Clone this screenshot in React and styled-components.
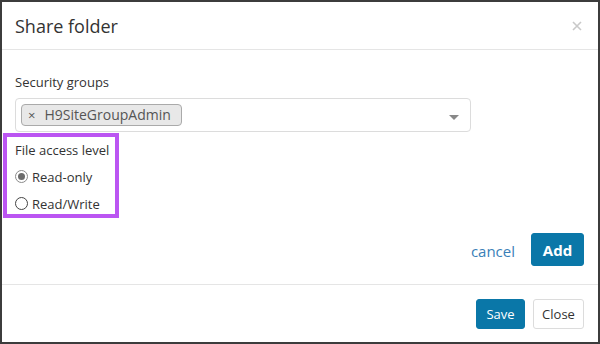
import React from "react";
import styled, { createGlobalStyle } from "styled-components";

const Global = createGlobalStyle`
  html, body { margin: 0; padding: 0; background: #fff; }
  body { font-family: "Open Sans", "Liberation Sans", sans-serif; color: #333; }
  * { box-sizing: border-box; }
`;

const Frame = styled.div`
  width: 600px;
  height: 344px;
  border: 2px solid #3c3c3c;
  display: flex;
  flex-direction: column;
  background: #fff;
`;

const Header = styled.div`
  height: 48px;
  flex: none;
  display: flex;
  align-items: center;
  justify-content: space-between;
  padding: 0 16px 0 13px;
  border-bottom: 1px solid #e5e5e5;
`;

const Title = styled.h4`
  margin: 0;
  font-size: 18px;
  font-weight: 400;
  line-height: 24px;
  color: #333;
`;

const CloseX = styled.button`
  border: 0;
  background: none;
  padding: 0;
  width: 10px;
  height: 10px;
  display: flex;
  margin-top: 1px;
`;

const Body = styled.div`
  flex: 1;
  padding: 23px 13px 0 13px;
  display: flex;
  flex-direction: column;
`;

const Label = styled.div`
  font-size: 13px;
  line-height: 18px;
  color: #333;
`;

const Select = styled.div`
  margin-top: 7px;
  width: 456px;
  height: 34px;
  border: 1px solid #dcdcdc;
  border-radius: 4px;
  display: flex;
  align-items: center;
  padding: 0 11px 0 5px;
  justify-content: space-between;
`;

const Tag = styled.span`
  display: inline-flex;
  align-items: center;
  height: 22px;
  padding: 0 10px 0 6px;
  border: 1px solid #aaa;
  border-radius: 4px;
  background: #e8e8e8;
  color: #555;
  font-size: 14px;
  line-height: 20px;
`;

const TagX = styled.span`
  font-size: 13px;
  margin-right: 9px;
  color: #555;
`;

const Caret = styled.span`
  width: 0;
  height: 0;
  border-left: 5px solid transparent;
  border-right: 5px solid transparent;
  border-top: 5px solid #888;
  margin-top: 4px;
`;

const Group = styled.div`
  position: relative;
  margin-top: 9px;
  display: flex;
  flex-direction: column;
`;

const Highlight = styled.div`
  position: absolute;
  left: -12px;
  top: -8px;
  width: 116px;
  height: 85px;
  border: 4px solid #bb55f2;
  pointer-events: none;
`;

const RadioRow = styled.label`
  display: flex;
  align-items: center;
  gap: 4px;
  height: 27px;
  font-size: 13px;
  color: #333;
  margin-top: ${(p) => (p.$first ? "4px" : "0")};
`;

const RadioDot = styled.span`
  width: 13px;
  height: 13px;
  border-radius: 50%;
  border: 1px solid ${(p) => (p.$checked ? "#8a8a8a" : "#444")};
  background: #fff;
  display: flex;
  align-items: center;
  justify-content: center;
  &::after {
    content: "";
    width: 7px;
    height: 7px;
    border-radius: 50%;
    background: ${(p) => (p.$checked ? "#6b6b6b" : "transparent")};
  }
`;

const Actions = styled.div`
  margin-top: 16px;
  display: flex;
  justify-content: flex-end;
  align-items: center;
  gap: 16px;
  padding-right: 1px;
`;

const LinkBtn = styled.a`
  font-size: 15px;
  color: #3a7fb8;
  text-decoration: none;
  margin-top: 2px;
`;

const Button = styled.button`
  font-family: "Open Sans", "Liberation Sans", sans-serif;
  border-radius: 3px;
  cursor: pointer;
  padding: 0;
  height: ${(p) => (p.$big ? "33px" : "30px")};
  width: ${(p) => p.$w}px;
  font-size: ${(p) => (p.$big ? "15px" : "13px")};
  font-weight: ${(p) => (p.$big ? 700 : 400)};
  background: ${(p) => (p.$primary ? "#0a77a8" : "#fff")};
  color: ${(p) => (p.$primary ? "#fff" : "#333")};
  border: 1px solid ${(p) => (p.$primary ? "#0a77a8" : "#dcdcdc")};
`;

const Footer = styled.div`
  height: 58px;
  flex: none;
  border-top: 1px solid #e5e5e5;
  display: flex;
  justify-content: flex-end;
  align-items: flex-start;
  padding: 14px 14px 0 0;
  gap: 8px;
`;

export default function App() {
  return (
    <>
      <Global />
      <Frame>
        <Header>
          <Title>Share folder</Title>
          <CloseX aria-label="close">
            <svg width="10" height="10" viewBox="0 0 10 10">
              <path d="M1 1L9 9M9 1L1 9" stroke="#c9c9c9" strokeWidth="1.6" />
            </svg>
          </CloseX>
        </Header>
        <Body>
          <Label>Security groups</Label>
          <Select>
            <Tag>
              <TagX>×</TagX>H9SiteGroupAdmin
            </Tag>
            <Caret />
          </Select>
          <Group>
            <Highlight />
            <Label>File access level</Label>
            <RadioRow $first>
              <RadioDot $checked />
              Read-only
            </RadioRow>
            <RadioRow>
              <RadioDot />
              Read/Write
            </RadioRow>
          </Group>
          <Actions>
            <LinkBtn href="#">cancel</LinkBtn>
            <Button $primary $big $w={53}>Add</Button>
          </Actions>
        </Body>
        <Footer>
          <Button $primary $w={49}>Save</Button>
          <Button $w={51}>Close</Button>
        </Footer>
      </Frame>
    </>
  );
}
